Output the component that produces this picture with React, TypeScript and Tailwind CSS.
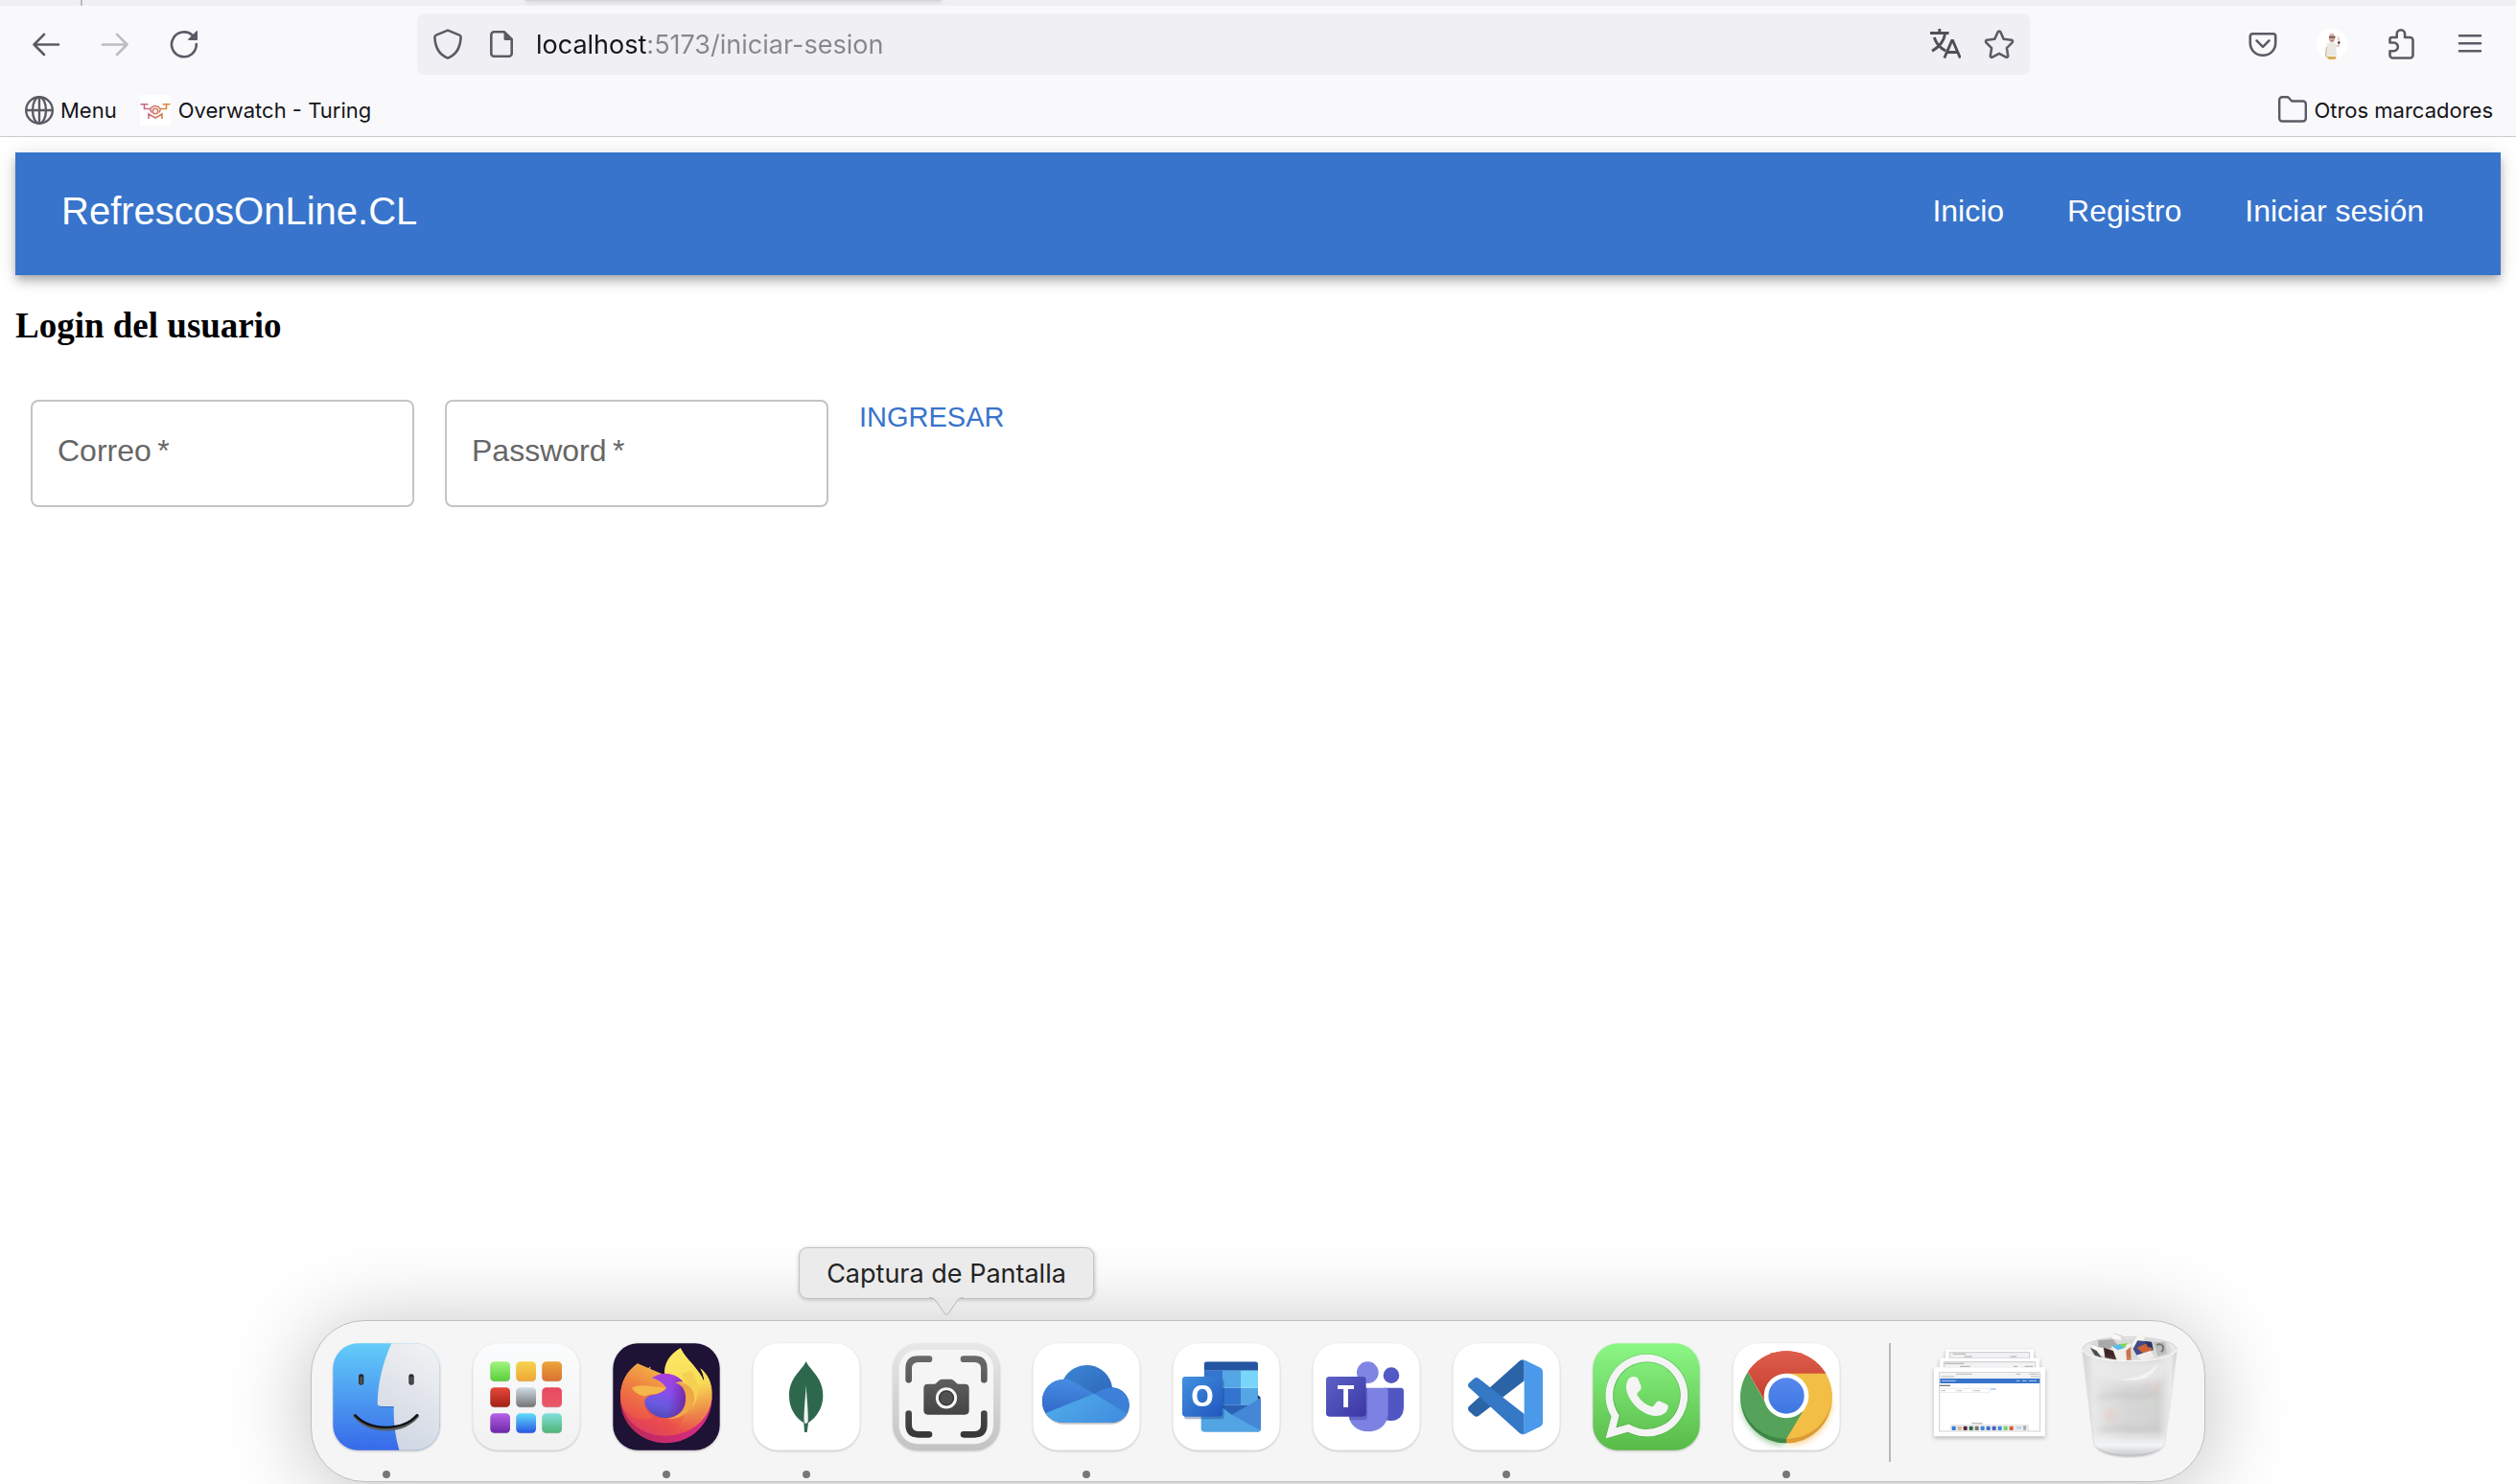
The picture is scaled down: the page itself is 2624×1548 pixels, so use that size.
import React from 'react';

/* ---------- Browser toolbar icons ---------- */

const stroke = { fill: 'none', stroke: '#5b5b66', strokeWidth: 2.6 } as const;

function BackIcon() {
  return (
    <svg className="size-8" viewBox="0 0 32 32" {...stroke} strokeLinecap="round" strokeLinejoin="round">
      <path d="M29 16.5H4M14 5.8 3.5 16.5 14 27" />
    </svg>
  );
}

function ForwardIcon() {
  return (
    <svg className="size-8" viewBox="0 0 32 32" {...stroke} stroke="#bcbcc2" strokeLinecap="round" strokeLinejoin="round">
      <path d="M3 16.5h25M18 5.8 28.5 16.5 18 27" />
    </svg>
  );
}

function ReloadIcon() {
  return (
    <svg className="size-8" viewBox="0 0 32 32" {...stroke}>
      <path d="M28.8 16A12.9 12.9 0 1 1 25 7.2" strokeLinecap="round" />
      <path d="M30 2.6v8.6a.8.8 0 0 1-.8.8h-8c-1 0-1.300-1-.7-1.600L29 2.200c.5-.5 1-.2 1 .4z" fill="#5b5b66" stroke="none" />
    </svg>
  );
}

function ShieldIcon() {
  return (
    <svg className="size-8" viewBox="0 0 32 32" {...stroke} strokeLinejoin="round">
      <path d="M16 1.600 28.200 6.600c1 .4 1.500 1.200 1.400 2.300C29.100 19 25.500 27 16 30.600 6.500 27 2.900 19 2.400 8.900c-.1-1.100.4-1.900 1.400-2.300z" />
    </svg>
  );
}

function PageIcon() {
  return (
    <svg className="size-8" viewBox="0 0 32 32" {...stroke} strokeLinejoin="round">
      <path d="M19 3.300H8.300a3 3 0 0 0-3 3v19.400a3 3 0 0 0 3 3h15.400a3 3 0 0 0 3-3V11z" />
      <path d="M18.500 2.500 28 12h-8a1.500 1.500 0 0 1-1.500-1.500z" fill="#5b5b66" stroke="none" />
    </svg>
  );
}

function TranslateIcon() {
  return (
    <svg className="size-8" viewBox="0 0 32 32" fill="none" stroke="#4f4f58" strokeWidth="2.900">
      <path d="M0 4.500h19.500M9.800 0v4.500M4.200 9c2 6 7 11.500 12 14M15.600 5C14.500 13 8.500 19.500 2 23.200" />
      <path d="M14.800 30.500 22.600 12.500h1l7.800 18M17.800 24.500h11" />
    </svg>
  );
}

function StarIcon() {
  return (
    <svg className="size-8" viewBox="0 0 32 32" {...stroke} strokeLinejoin="round">
      <path d="M14.700 3.300c.5-1.100 2.100-1.100 2.600 0l3.400 7.400 8.100 1.100c1.200.2 1.700 1.600.8 2.500l-5.700 5.800 1.300 8c.2 1.200-1 2.100-2.100 1.500L16 25.900l-7.100 3.700c-1.100.6-2.300-.3-2.100-1.500l1.300-8-5.700-5.800c-.9-.9-.4-2.300.8-2.500l8.100-1.100z" />
    </svg>
  );
}

function PocketIcon() {
  return (
    <svg className="size-8" viewBox="0 0 32 32" {...stroke} strokeLinecap="round" strokeLinejoin="round">
      <path d="M5.300 5.300h21.400a2.500 2.500 0 0 1 2.500 2.500V15c0 7.300-5.900 12.700-13.200 12.700S2.800 22.300 2.800 15V7.800a2.500 2.500 0 0 1 2.500-2.500z" />
      <path d="m9.500 12.300 6.500 6.500 6.500-6.500" />
    </svg>
  );
}

function AvatarIcon() {
  return (
    <svg className="size-8" viewBox="0 0 32 32">
      <circle cx="16" cy="16" r="16" fill="#fff" />
      <path d="M10.500 15.500q5-3 9.500 0l1 13H10z" fill="#e9e8e2" />
      <path d="M10.500 19 9.500 27l1 3M20 17.500l2.800 1 1-5-1.300-5" fill="none" stroke="#dcb0a0" strokeWidth="1.200" />
      <ellipse cx="16" cy="9.500" rx="3.200" ry="4.500" fill="#d6a89a" />
      <path d="M13 8h6.500v1.500H13z" fill="#5f4c4b" />
      <path d="M14.500 11.500q1.500 1.200 3 0l-1.500 2z" fill="#85605a" />
      <circle cx="23.200" cy="14.500" r="1.200" fill="#3b3439" />
      <path d="M11 29h9.500l-.5 2.500q-4 1-8 0z" fill="#d7ad55" />
    </svg>
  );
}

function PuzzleIcon() {
  return (
    <svg className="size-8" viewBox="0 0 32 32" {...stroke} strokeLinejoin="round">
      <path d="M4.500 14.500V11a2 2 0 0 1 2-2h5.200V5.500a4.200 4.200 0 0 1 8.400 0V9h5.400a3 3 0 0 1 3 3v15.500a3 3 0 0 1-3 3h-18a3 3 0 0 1-3-3v-4.300h4a4.300 4.300 0 0 0 0-8.700z" />
    </svg>
  );
}

function MenuIcon() {
  return (
    <svg className="size-8" viewBox="0 0 32 32" {...stroke} strokeLinecap="round">
      <path d="M5 7.300h22M5 15.300h22M5 23.300h22" />
    </svg>
  );
}

function GlobeIcon() {
  return (
    <svg className="size-8" viewBox="0 0 32 32" {...stroke} strokeWidth="2.400">
      <circle cx="16" cy="16" r="13.800" />
      <ellipse cx="16" cy="16" rx="7" ry="13.800" />
      <path d="M2 16h28M16 2v28" />
    </svg>
  );
}

function DroneIcon() {
  return (
    <svg className="size-8 bg-white" viewBox="0 0 32 32" fill="none" strokeWidth="1.600">
      <defs>
        <linearGradient id="drone" gradientUnits="userSpaceOnUse" x1="0" y1="0" x2="32" y2="0">
          <stop offset="0" stopColor="#c35f9b" />
          <stop offset="1" stopColor="#e08f35" />
        </linearGradient>
      </defs>
      <g stroke="url(#drone)">
        <path d="M.5 9.800h8M23.500 9.800h8M4.500 10v4.500h6M27.500 10v4.500h-6" />
        <path d="M10.500 14.500q5.500-6 11 0M10.500 14.500l1.500 4M21.500 14.500l-1.500 4" />
        <circle cx="16" cy="17" r="2.700" />
        <path d="M9 25v-5l7 4 7-4v5" />
      </g>
    </svg>
  );
}

function FolderIcon() {
  return (
    <svg className="size-8" viewBox="0 0 32 32" {...stroke} strokeWidth="2.400" strokeLinejoin="round">
      <path d="M2.200 24.500V5.200a3 3 0 0 1 3-3h6l4 4.300h11.600a3 3 0 0 1 3 3v15a3 3 0 0 1-3 3H5.200a3 3 0 0 1-3-3z" />
    </svg>
  );
}

/* ---------- Dock icons, drawn on a 336-unit tile ---------- */

function Tile({ x, y, fill = '#fff', children }: { x: number; y: number; fill?: string; children?: React.ReactNode }) {
  return (
    <svg className="size-28 drop-shadow-[0_1px_1px_rgba(0,0,0,0.22)]" viewBox={`${x} ${y} 336 336`}>
      <rect x={x + 1} y={y + 1} width="334" height="334" rx="78" fill={fill} />
      {children}
    </svg>
  );
}

function Vertical({ id, from, to }: { id: string; from: string; to: string }) {
  return (
    <linearGradient id={id} x1="0" y1="0" x2="0" y2="1">
      <stop offset="0" stopColor={from} />
      <stop offset="1" stopColor={to} />
    </linearGradient>
  );
}

function Finder() {
  return (
    <Tile x={112} y={122} fill="url(#finder-blue)">
      <defs>
        <Vertical id="finder-blue" from="#62cdf9" to="#376ae9" />
        <linearGradient id="finder-grey" x1="1" y1="0" x2=".6" y2="1">
          <stop offset="0" stopColor="#f4f4f4" />
          <stop offset="1" stopColor="#d2d9e4" />
        </linearGradient>
        <clipPath id="finder-clip">
          <rect x="113" y="123" width="334" height="334" rx="78" />
        </clipPath>
      </defs>
      <g clipPath="url(#finder-clip)">
        <path d="M297 120C270 180 254 240 252 309q0 11 10 11h41q-2 75 18 140h140V120z" fill="url(#finder-grey)" />
        <path d="M256 318q3 4 9 4h38" fill="none" stroke="#3b66ac" strokeWidth="3" opacity=".7" />
      </g>
      <g fill="none" strokeLinecap="round">
        <path d="M201 227v18M358 227v18" stroke="#27292c" strokeWidth="16" />
        <path d="M201 232v14M358 232v14" stroke="#4c4c4c" strokeWidth="11" />
        <path d="M182 350c48 54 148 54 194 0" stroke="#5a5c60" strokeWidth="12" />
        <path d="M182 348c48 50 148 50 194 0" stroke="#101214" strokeWidth="7" />
      </g>
    </Tile>
  );
}

const launchpadCells = [
  ['#a1f47e', '#59cf3c'],
  ['#f6d44f', '#efa736'],
  ['#eda43a', '#d97132'],
  ['#e5493a', '#a32015'],
  ['#cfdde5', '#747474'],
  ['#e94760', '#ea5a66'],
  ['#b660e6', '#6d28a8'],
  ['#62dcfb', '#2656e3'],
  ['#82dfda', '#4eb576'],
];

function Launchpad() {
  return (
    <Tile x={550} y={122} fill="url(#launch-bg)">
      <defs>
        <Vertical id="launch-bg" from="#fbfcfd" to="#f1f1f1" />
        {launchpadCells.map(([from, to], i) => (
          <Vertical key={i} id={`launch-${i}`} from={from} to={to} />
        ))}
      </defs>
      {launchpadCells.map((_, i) => (
        <g key={i}>
          <rect x={605 + (i % 3) * 81} y={182 + Math.floor(i / 3) * 81} width="62" height="61" rx="13" fill="#9a9a9a" opacity=".5" />
          <rect x={605 + (i % 3) * 81} y={180 + Math.floor(i / 3) * 81} width="62" height="61" rx="13" fill={`url(#launch-${i})`} />
        </g>
      ))}
    </Tile>
  );
}

function FirefoxLogo() {
  return (
    <Tile x={988} y={122} fill="#1e1235">
      <defs>
        <linearGradient id="ff-body" gradientUnits="userSpaceOnUse" x1="1240" y1="180" x2="1090" y2="430">
          <stop offset="0" stopColor="#f9d858" />
          <stop offset=".35" stopColor="#f2a243" />
          <stop offset=".7" stopColor="#ec4f4a" />
          <stop offset="1" stopColor="#dc3b63" />
        </linearGradient>
        <linearGradient id="ff-flame" gradientUnits="userSpaceOnUse" x1="1190" y1="140" x2="1250" y2="400">
          <stop offset="0" stopColor="#fbe966" />
          <stop offset=".45" stopColor="#f8dc55" />
          <stop offset=".75" stopColor="#ee9249" />
          <stop offset="1" stopColor="#e5484f" stopOpacity="0" />
        </linearGradient>
        <linearGradient id="ff-head" gradientUnits="userSpaceOnUse" x1="1120" y1="200" x2="1050" y2="350">
          <stop offset="0" stopColor="#f3b047" />
          <stop offset=".5" stopColor="#ee7b42" />
          <stop offset="1" stopColor="#ec544a" />
        </linearGradient>
        <linearGradient id="ff-orb" gradientUnits="userSpaceOnUse" x1="1165" y1="216" x2="1135" y2="358">
          <stop offset="0" stopColor="#ac3fd8" />
          <stop offset=".4" stopColor="#8a4cec" />
          <stop offset=".7" stopColor="#6a5ae0" />
          <stop offset="1" stopColor="#5447b4" />
        </linearGradient>
        <linearGradient id="ff-orb-side" gradientUnits="userSpaceOnUse" x1="1165" y1="290" x2="1222" y2="300">
          <stop offset="0" stopColor="#6f259f" stopOpacity="0" />
          <stop offset="1" stopColor="#6f259f" />
        </linearGradient>
        <linearGradient id="ff-base" x1="0" y1="0" x2="1" y2="0">
          <stop offset="0" stopColor="#b82a55" />
          <stop offset="1" stopColor="#d92c86" />
        </linearGradient>
      </defs>
      <path d="M1012 290c-4 85 64 145 143 145 80 0 144-64 144-145z" fill="url(#ff-base)" />
      <path d="M1066 186c-34 24-54 60-54 104 4 72 66 122 138 122 84 0 149-56 149-132 0-34-14-62-37-79 8 14 12 28 12 42-18-44-54-66-74-105-34 22-50 52-50 84z" fill="url(#ff-body)" />
      <path d="M1200 138c-36 20-54 52-49 86l40 32c40 30 40 120-30 154 80-6 134-60 136-128 1-34-12-62-35-81 8 14 12 28 12 42-18-44-54-66-74-105z" fill="url(#ff-flame)" />
      <path d="M1106 195q-8 12-10 24l14 14q-8-18-4-38z" fill="#e67350" />
      <circle cx="1153" cy="287" r="70" fill="url(#ff-orb)" />
      <circle cx="1153" cy="287" r="70" fill="url(#ff-orb-side)" />
      <path d="M1184 247c16-8 30-4 34 2l-16-30 30-10c28 30 30 80 2 122 8-16 10-30 6-44-6-28-30-44-56-40z" fill="#f6d052" />
      <path d="M1184 247c24 4 34 28 32 54-2 30-22 52-56 57 44 6 82-30 84-64 0-32-30-54-60-47z" fill="#f0a746" />
      <path d="M1066 186c-2 14 0 25 7 33 7 0 12 1 16 2 3-10 9-19 17-26-2 16 1 28 8 37 20 6 34 16 42 31-10 12-24 18-38 20-16 2-28 10-30 20 0 24 8 40 26 52-60 20-102-20-102-65 0-44 20-80 54-104z" fill="url(#ff-head)" />
      <path d="M1048 262c26-14 62-4 108 0-10 12-24 16-38 20-14 0-22 4-32 6-16-4-30-12-38-26z" fill="#f5b64a" />
    </Tile>
  );
}

function MongoDb() {
  return (
    <Tile x={46} y={363}>
      <path d="M213 420c12 28 53 50 53 107 0 42-22 68-46 86l-4 29h-8l-2-29c-26-18-46-44-46-86 0-57 41-79 53-107z" fill="#2d684d" />
      <path d="M213 494c2 40 8 90 6 116-4 6-10 6-12 0-2-26 4-76 6-116z" fill="#f1f4f2" />
    </Tile>
  );
}

function ScreenshotApp() {
  return (
    <Tile x={484} y={363} fill="url(#shot-frame)">
      <defs>
        <Vertical id="shot-frame" from="#e8e8e8" to="#c3c3c3" />
        <Vertical id="shot-body" from="#5f5f5f" to="#444444" />
        <linearGradient id="shot-corners" gradientUnits="userSpaceOnUse" x1="0" y1="403" x2="0" y2="660">
          <stop offset="0" stopColor="#6a6a6a" />
          <stop offset="1" stopColor="#363636" />
        </linearGradient>
      </defs>
      <rect x="504" y="384" width="295" height="295" rx="58" fill="#f5f5f5" />
      <g fill="none" stroke="url(#shot-corners)" strokeWidth="20" strokeLinecap="round">
        <path d="M534 478v-35q0-30 30-30h34M706 413h34q30 0 30 30v35M534 584v35q0 30 30 30h34M706 649h34q30 0 30-30v-35" />
      </g>
      <path d="M594 491h20q5 0 8-4l6-6q4-5 10-5h28q6 0 10 5l6 6q3 4 8 4h20q13 0 13 13v70q0 13-13 13H594q-13 0-13-13v-70q0-13 13-13z" fill="url(#shot-body)" />
      <circle cx="652" cy="535" r="29" fill="#505050" stroke="#f5f5f5" strokeWidth="9" />
      <circle cx="652" cy="535" r="22" fill="none" stroke="#2c2c2c" strokeWidth="3" />
    </Tile>
  );
}

function OneDrive() {
  return (
    <Tile x={922} y={363}>
      <defs>
        <linearGradient id="od-back" x1="0" y1="0" x2="1" y2="1">
          <stop offset="0" stopColor="#3f8cdb" />
          <stop offset="1" stopColor="#2756a9" />
        </linearGradient>
        <linearGradient id="od-left" x1=".6" y1="0" x2=".5" y2="1">
          <stop offset="0" stopColor="#478fe2" />
          <stop offset="1" stopColor="#2f65c8" />
        </linearGradient>
        <linearGradient id="od-bottom" x1="0" y1="0" x2="1" y2=".5">
          <stop offset="0" stopColor="#53b0ea" />
          <stop offset="1" stopColor="#418fe0" />
        </linearGradient>
        <clipPath id="od-clip">
          <path d="M1018 477a81 81 0 0 1 153 25 55 55 0 0 1-4 110H1020a67 67 0 0 1-2-135z" />
        </clipPath>
      </defs>
      <path d="M1018 482a81 81 0 0 1 153 25 55 55 0 0 1-4 110H1020a67 67 0 0 1-2-135z" fill="#8a8a8a" opacity=".5" />
      <g clipPath="url(#od-clip)">
        <rect x="950" y="430" width="275" height="185" fill="url(#od-back)" />
        <path d="M940 470h70q22 4 40 14l66 38-160 80z" fill="url(#od-left)" />
        <path d="M1116 522q28-20 56-20 54 4 60 55l-8 30z" fill="#3c80d8" />
        <path d="M1115 521 1224 587v40H950v-40z" fill="url(#od-bottom)" />
      </g>
    </Tile>
  );
}

function Outlook() {
  return (
    <Tile x={99} y={122}>
      <defs>
        <linearGradient id="ol-badge" x1="0" y1="0" x2="1" y2="1">
          <stop offset="0" stopColor="#4292e0" />
          <stop offset="1" stopColor="#2055bd" />
        </linearGradient>
        <clipPath id="ol-clip">
          <rect x="197" y="180" width="169" height="190" rx="10" />
        </clipPath>
      </defs>
      <g clipPath="url(#ol-clip)">
        <path d="M197 180h169v28H197z" fill="#2455a1" />
        <path d="M197 208h58v54h-58zM255 262h57v54h-57z" fill="#3374cf" />
        <path d="M255 208h57v54h-57zM312 262h54v54h-54z" fill="#54a6e5" />
        <path d="M312 208h54v54h-54z" fill="#7ad5fb" />
        <path d="M197 262h58v90h-58z" fill="#2c62b8" />
        <path d="M255 316h111v60H255z" fill="#54a6e5" />
        <path d="M245 316h95l-56 31z" fill="#2a61b4" />
      </g>
      <path d="m365 285 10 7-9 8z" fill="#1d3567" />
      <path d="M375 294v96q0 10-10 10l-90-48z" fill="#4487d6" />
      <path d="M188 330h66l118 64q-2 6-8 6H198q-10 0-10-10z" fill="#52a4e2" />
      <rect x="134" y="234" width="126" height="126" rx="11" fill="#103a75" opacity=".35" />
      <rect x="129" y="227" width="126" height="125" rx="10" fill="url(#ol-badge)" />
      <text x="192" y="321" textAnchor="middle" fontFamily="'Open Sans', sans-serif" fontSize="92" fontWeight="700" fill="#fff">O</text>
    </Tile>
  );
}

function Teams() {
  return (
    <Tile x={537} y={122}>
      <defs>
        <linearGradient id="tm-badge" x1="0" y1="0" x2="1" y2="1">
          <stop offset="0" stopColor="#5d62c6" />
          <stop offset="1" stopColor="#3a37a5" />
        </linearGradient>
      </defs>
      <circle cx="709" cy="214" r="34" fill="#8085e4" />
      <circle cx="783" cy="223" r="25" fill="#5359c4" />
      <path d="M760 262h52q10 0 10 10v50c0 26-16 43-38 43-14 0-20-3-24-6z" fill="#5157c2" />
      <path d="M650 262h113q10 0 10 10v66c0 40-28 61-62 61s-61-22-61-56z" fill="#7d82e2" />
      <path d="M650 262h58v90q0 11-12 11h-44z" fill="#4b4fae" opacity=".55" />
      <rect x="579" y="227" width="125" height="125" rx="10" fill="url(#tm-badge)" />
      <text x="641" y="323" textAnchor="middle" fontFamily="'Open Sans', sans-serif" fontSize="94" fontWeight="700" fill="#fff">T</text>
    </Tile>
  );
}

function VsCode() {
  return (
    <Tile x={975} y={122}>
      <path d="M1199 176v64l-142 109q-8 6-15 0l-16-14q-6-8 0-15l158-142q7-6 15-2z" fill="#2a64a6" />
      <path d="M1199 406v-62L1057 233q-8-6-15 0l-16 14q-6 8 0 14l158 142q7 6 15 3z" fill="#3478c6" />
      <path d="M1190 407q8-2 9-13V188q0-11-9-13 6-2 12 1l48 23q7 4 7 12v160q0 8-7 12l-48 23q-6 3-12 1z" fill="#4b99ea" />
    </Tile>
  );
}

function WhatsApp() {
  return (
    <Tile x={123} y={122} fill="url(#wa-bg)">
      <defs>
        <Vertical id="wa-bg" from="#8bf785" to="#58bb48" />
      </defs>
      <path d="M295 169a117 117 0 1 1-60 219l-54 15 14-53A117 117 0 0 1 295 169z" fill="none" stroke="#3f9a3a" strokeOpacity=".5" strokeWidth="27" />
      <path d="M295 169a117 117 0 1 1-60 219l-55 16 14-54A117 117 0 0 1 295 169z" fill="none" stroke="#f4f4f4" strokeWidth="23" />
      <path d="M250 227c8 0 13 2 16 9l8 20c3 10-3 14-11 22-2 3-1 6 1 9 11 17 25 28 43 34 4 1 6-1 8-4 7-10 10-16 19-13l20 9c5 3 6 6 5 11-3 18-20 26-38 26-50-4-90-52-93-88 0-20 8-34 22-35z" fill="#f4f4f4" />
    </Tile>
  );
}

function ChromeLogo() {
  return (
    <Tile x={561} y={122}>
      <defs>
        <Vertical id="gc-red" from="#e0604f" to="#c63f2f" />
        <Vertical id="gc-blue" from="#5787ee" to="#3d77e2" />
        <filter id="gc-soft" x="-20%" y="-20%" width="140%" height="140%">
          <feGaussianBlur stdDeviation="9" />
        </filter>
        <clipPath id="gc-clip">
          <circle cx="729" cy="291" r="144" />
        </clipPath>
      </defs>
      <path d="M588 300a144 144 0 0 0 141 143z" fill="#4e9a52" opacity=".6" filter="url(#gc-soft)" />
      <path d="M872 300a144 144 0 0 1-143 143z" fill="#efb041" opacity=".6" filter="url(#gc-soft)" />
      <g clipPath="url(#gc-clip)">
        <path d="M570 140h320v80H729l-60 90z" fill="url(#gc-red)" />
        <path d="M570 140 609 213l60 105 120 20-60 105H570z" fill="#55a25a" />
        <path d="M609 213 550 130h340v87H729l-60 35-8 50z" fill="url(#gc-red)" />
        <path d="M729 217h170v230H729v-25l60-100z" fill="#f2be45" />
      </g>
      <path d="M729 422a144 139 0 0 0 143-122 144 144 0 0 1-143 135z" fill="#dc9a38" />
      <path d="M586 300a144 139 0 0 0 143 122v13a144 144 0 0 1-143-135z" fill="#3e8746" />
      <circle cx="729" cy="287" r="70" fill="#fff" />
      <circle cx="729" cy="287" r="56" fill="url(#gc-blue)" />
    </Tile>
  );
}

const miniColors = ['#2f7be6', '#e0b48c', '#5a2438', '#2d684d', '#777777', '#3f86dc', '#3374cf', '#5359c4', '#3f86dc', '#70d868', '#d65a40'];

function MinimizedWindows() {
  return (
    <svg className="h-24 w-[116px] drop-shadow-[0_2px_2px_rgba(0,0,0,0.25)]" viewBox="231 140 348 288">
      <path d="M267 142h276v30H267z" fill="#fff" />
      <path d="M280 151h250v18H280z" fill="#f2f2f5" stroke="#c9c9cd" strokeWidth="3" />
      <path d="M290 156h40M325 164h25M470 164h20" stroke="#aaa" strokeWidth="3" />
      <path d="M249 169h312v34H249z" fill="#fff" />
      <path d="M262 181h286v18H262z" fill="#f2f2f5" stroke="#c9c9cd" strokeWidth="3" />
      <path d="M265 186h60M312 195h32M480 195h12M515 195h25" stroke="#aaa" strokeWidth="3" />
      <path d="M231 198h348v216H231z" fill="#fff" />
      <path d="M248 214h315v184H248z" fill="#fff" stroke="#cfcfcf" strokeWidth="3" />
      <path d="M250 216h311v17H250z" fill="#f4f4f7" />
      <path d="M250 233h312v15H250z" fill="#3874cb" />
      <path d="M255 240h44M489 240h10M507 240h14M528 240h24" stroke="#b6cdee" strokeWidth="3" />
      <path d="M300 219h50M488 219h14M530 219h28M252 227h42M534 227h26" stroke="#bbb" strokeWidth="3" />
      <path d="M249 255h33" stroke="#777" strokeWidth="4" />
      <path d="M252 264h48v13h-48zM304 264h48v13h-48zM356 264h48v13h-48z" fill="none" stroke="#e2e2e2" strokeWidth="2" />
      <path d="M254 271h14M306 271h12M358 271h18" stroke="#bbb" strokeWidth="3" />
      <path d="M408 266h17" stroke="#7fa8e2" strokeWidth="3" />
      <rect x="281" y="376" width="248" height="22" rx="6" fill="#eaeaea" />
      <path d="M349 373h34" stroke="#bbb" strokeWidth="4" />
      {miniColors.map((color, i) => (
        <rect key={i} x={287 + i * 18} y="382" width="12" height="13" rx="3" fill={color} />
      ))}
      <path d="M489 387h15" stroke="#b7cdee" strokeWidth="6" />
      <path d="M510 381h10l-2 14h-6z" fill="#a9a9a9" />
    </svg>
  );
}

function Trash() {
  return (
    <svg className="h-[132px] w-[102px]" viewBox="690 90 306 396">
      <defs>
        <linearGradient id="bin-side" x1="0" y1="0" x2="1" y2="0">
          <stop offset="0" stopColor="#d3d3d5" />
          <stop offset=".12" stopColor="#e9e9ea" />
          <stop offset=".45" stopColor="#d8d8d8" />
          <stop offset=".8" stopColor="#d2d2d2" />
          <stop offset=".93" stopColor="#ececed" />
          <stop offset="1" stopColor="#cfd0d2" />
        </linearGradient>
        <linearGradient id="bin-foot" x1="0" y1="0" x2="0" y2="1">
          <stop offset="0" stopColor="#f3f4f5" stopOpacity="0" />
          <stop offset=".6" stopColor="#f3f4f6" />
          <stop offset="1" stopColor="#c9ccd1" />
        </linearGradient>
        <filter id="bin-blur" x="-30%" y="-30%" width="160%" height="160%">
          <feGaussianBlur stdDeviation="9" />
        </filter>
        <filter id="bin-shadow" x="-10%" y="-10%" width="120%" height="120%">
          <feGaussianBlur stdDeviation="3" />
        </filter>
      </defs>
      <path d="M697 150 733 440c8 30 60 42 110 42s98-12 108-42l38-290z" fill="#777" opacity=".5" filter="url(#bin-shadow)" />
      <ellipse cx="843" cy="145" rx="148" ry="38" fill="#e7e8ea" stroke="#cfd0d3" strokeWidth="3" />
      <path d="m722 130 20-16 44-6 8-14 26 8 10 12 24-2 20-16 24 14 26 8 38 6 14 26-20 24-110 14-100-12-24-20z" fill="#d9d9d8" />
      <path d="m722 132 36 10 10 24-36-8zM790 96l24 8 4 14-30-6z" fill="#f8f8f8" />
      <path d="m745 118 46-4 14 18-26 12-34-6z" fill="#a9a9a9" />
      <path d="m720 140 20 10 16 22-22-8z" fill="#4b4b4b" />
      <path d="m762 140 40 14 4 26-40-8z" fill="#3f2424" />
      <path d="m786 136 62-8-8 52-36 2z" fill="#f0efeb" />
      <path d="m788 136 24-7 16 12-22 7z" fill="#57bde9" />
      <path d="m812 129 24-2-8 14z" fill="#7ad940" />
      <path d="m832 150 14-12 2 44-14 0z" fill="#c9744a" />
      <path d="m850 132 22-38 20 14-30 44z" fill="#f6f5f2" />
      <path d="m868 118 44 4 6 26-52 18-12-22z" fill="#3f4c86" />
      <path d="m866 140 32-14 18 20-28 16z" fill="#cc6138" />
      <path d="m890 120 22 4 4 18-16-4z" fill="#2b3566" />
      <path d="m864 164 44-14 14 20-40 10z" fill="#efeeec" />
      <path d="m918 124 36-2 6 36-28 10z" fill="#bdbdbb" />
      <path d="M928 132c16-8 28 8 14 22" fill="none" stroke="#777" strokeWidth="6" />
      <path d="M695 144c4 24 70 38 148 38s144-14 148-38l-38 292c-4 26-60 40-110 40s-104-14-110-40z" fill="url(#bin-side)" opacity=".97" />
      <path d="M720 174c40 14 200 14 250-4l-22 70c-60 20-150 14-210-10z" fill="#ececec" opacity=".75" filter="url(#bin-blur)" />
      <path d="M804 238c50 4 90-10 126-46-10 34-40 62-126 46z" fill="#f4f4f4" opacity=".9" />
      <g filter="url(#bin-blur)" opacity=".5">
        <circle cx="785" cy="352" r="20" fill="#e9c4bf" />
        <circle cx="925" cy="262" r="14" fill="#efcfc6" />
        <circle cx="910" cy="310" r="16" fill="#d5e0cf" />
        <path d="M745 300c60-30 120 10 190-20M750 400c60-20 100 10 180-10" fill="none" stroke="#bcbcbc" strokeWidth="14" />
      </g>
      <path d="M728 400h228l-4 38c-4 26-60 38-110 38s-104-12-110-38z" fill="url(#bin-foot)" />
      <path d="M695 144c4 24 70 38 148 38s144-14 148-38" fill="none" stroke="#f6f6f7" strokeWidth="4" />
    </svg>
  );
}

/* ---------- Page sections ---------- */

function ToolButton({ label, disabled, children }: { label: string; disabled?: boolean; children: React.ReactNode }) {
  return (
    <button type="button" aria-label={label} disabled={disabled} className="flex h-16 w-[72px] items-center justify-center">
      {children}
    </button>
  );
}

function BrowserChrome() {
  return (
    <header className="border-b border-[#cccccf] bg-[#f9f9fb] font-['Inter',sans-serif] text-[#15141a]">
      <div className="flex h-1.5 bg-[#f0f0f4]">
        <div className="w-[86px] border-r-2 border-[#bcbcc0]" />
        <div className="ml-[462px] h-px w-[434px] bg-[#d4d4d8] shadow-[0_1px_4px_rgba(0,0,0,0.35)]" />
      </div>
      <div className="flex items-center py-2 pr-3">
        <nav aria-label="Navegación" className="flex w-[435px] shrink-0 pl-3">
          <ToolButton label="Atrás"><BackIcon /></ToolButton>
          <ToolButton label="Adelante" disabled><ForwardIcon /></ToolButton>
          <ToolButton label="Recargar"><ReloadIcon /></ToolButton>
        </nav>
        <div className="flex h-16 flex-1 items-center rounded-lg bg-[#f0f0f4] px-4">
          <button type="button" aria-label="Protección"><ShieldIcon /></button>
          <button type="button" aria-label="Información del sitio" className="ml-6"><PageIcon /></button>
          <input
            type="text"
            aria-label="Dirección"
            defaultValue="localhost:5173/iniciar-sesion"
            className="ml-5 min-w-0 flex-1 bg-[linear-gradient(to_right,#15141a_116px,#86868c_116px)] bg-clip-text pt-0.5 text-[27px] leading-10 text-transparent outline-none"
          />
          <button type="button" aria-label="Traducir"><TranslateIcon /></button>
          <button type="button" aria-label="Añadir a marcadores" className="ml-6"><StarIcon /></button>
        </div>
        <div className="flex w-[495px] shrink-0 justify-end">
          <ToolButton label="Pocket"><PocketIcon /></ToolButton>
          <ToolButton label="Cuenta"><AvatarIcon /></ToolButton>
          <ToolButton label="Extensiones"><PuzzleIcon /></ToolButton>
          <ToolButton label="Menú de la aplicación"><MenuIcon /></ToolButton>
        </div>
      </div>
      <div className="flex h-14 items-center pt-px pr-6 pl-[25px] text-[22px] leading-8">
        <a href="#menu" className="flex items-center gap-1.5"><GlobeIcon />Menu</a>
        <a href="#overwatch" className="ml-6 flex items-center gap-2"><DroneIcon />Overwatch - Turing</a>
        <button type="button" className="ml-auto flex items-center gap-1.5"><FolderIcon />Otros marcadores</button>
      </div>
    </header>
  );
}

function AppBar() {
  return (
    <div className="flex h-32 items-start bg-[#3874cb] pr-20 pl-12 font-['Liberation_Sans',sans-serif] text-white shadow-[0_4px_8px_-2px_rgba(0,0,0,0.2),0_8px_10px_rgba(0,0,0,0.14),0_2px_20px_rgba(0,0,0,0.12)]">
      <a href="#inicio" className="mt-8 text-[40px] leading-[58px]">RefrescosOnLine.CL</a>
      <nav aria-label="Principal" className="mt-8 ml-auto flex gap-[66px] text-[32px] leading-[58px]">
        <a href="#inicio">Inicio</a>
        <a href="#registro">Registro</a>
        <a href="#iniciar-sesion">Iniciar sesión</a>
      </nav>
    </div>
  );
}

function Field({ id, label, type }: { id: string; label: string; type: string }) {
  return (
    <div className="relative">
      <input id={id} type={type} required className="h-28 w-[400px] rounded-lg border-2 border-[#c4c4c4] bg-white px-7 text-[32px] outline-none" />
      <label htmlFor={id} className="pointer-events-none absolute top-8 left-7 text-[32px] leading-[42px] text-[#666666]">
        {label}&thinsp;*
      </label>
    </div>
  );
}

const apps = [
  { name: 'Finder', Icon: Finder, running: true },
  { name: 'Launchpad', Icon: Launchpad, running: false },
  { name: 'Firefox', Icon: FirefoxLogo, running: true },
  { name: 'MongoDB Compass', Icon: MongoDb, running: true },
  { name: 'Captura de Pantalla', Icon: ScreenshotApp, running: false, tooltip: true },
  { name: 'OneDrive', Icon: OneDrive, running: true },
  { name: 'Outlook', Icon: Outlook, running: false },
  { name: 'Teams', Icon: Teams, running: false },
  { name: 'Visual Studio Code', Icon: VsCode, running: true },
  { name: 'WhatsApp', Icon: WhatsApp, running: false },
  { name: 'Chrome', Icon: ChromeLogo, running: true },
];

function Tooltip({ text }: { text: string }) {
  return (
    <div role="tooltip" className="absolute bottom-full left-1/2 mb-[46px] -translate-x-1/2 rounded-[9px] border border-[#c3c3c3] bg-[#ebebeb] px-7 pt-[9px] pb-[7px] font-['Inter',sans-serif] text-[27px] leading-9 whitespace-nowrap text-[#232323] shadow-[0_1px_4px_rgba(0,0,0,0.2)]">
      {text}
      <svg className="absolute top-full left-1/2 -mt-px h-5 w-10 -translate-x-1/2" viewBox="0 0 40 20">
        <path d="M2 0c4 0 6 2 8 5l8 12q2 3 4 0l8-12c2-3 4-5 8-5z" fill="#e8e8e8" />
        <path d="M2 .5c4 0 6 2 8 5l8 11.500q2 3 4 0l8-11.500c2-3 4-5 8-5" fill="none" stroke="#b4b4b4" />
      </svg>
    </div>
  );
}

function Dock() {
  return (
    <footer className="flex justify-center pb-0.5 font-['Inter',sans-serif]">
      <div className="flex items-start rounded-[56px] border border-[#bfbfbf] bg-[#f5f5f5] pt-[23px] pr-[27px] pb-[3px] pl-[22px] shadow-[0_8px_90px_rgba(0,0,0,0.26)]">
        <ul className="flex gap-[34px]">
          {apps.map(({ name, Icon, running, tooltip }) => (
            <li key={name} className="relative flex flex-col items-center">
              {tooltip && <Tooltip text={name} />}
              <button type="button" aria-label={name}><Icon /></button>
              <span className={running ? 'mt-[21px] size-2 rounded-full bg-[#777777]' : 'mt-[21px] size-2'} />
            </li>
          ))}
        </ul>
        <div className="ml-[51px] h-[124px] w-0.5 bg-[#b9b9b9]" />
        <button type="button" aria-label="Ventanas minimizadas" className="mt-1.5 ml-[45px]"><MinimizedWindows /></button>
        <button type="button" aria-label="Papelera" className="-mt-3 ml-[37px]"><Trash /></button>
      </div>
    </footer>
  );
}

export default function App() {
  return (
    <div className="flex min-h-screen flex-col overflow-hidden bg-white [&_svg]:block">
      <BrowserChrome />
      <main className="flex-1 px-4 pt-4">
        <AppBar />
        <h3 className="mt-8 font-['Liberation_Serif',serif] text-[37px] leading-[42px] font-bold text-black">Login del usuario</h3>
        <form className="mt-14 flex items-start gap-8 pl-4 font-['Liberation_Sans',sans-serif]" onSubmit={(e) => e.preventDefault()}>
          <Field id="correo" label="Correo" type="email" />
          <Field id="password" label="Password" type="password" />
          <button type="submit" className="text-[29px] leading-9 text-[#3874cb]">INGRESAR</button>
        </form>
      </main>
      <Dock />
    </div>
  );
}
